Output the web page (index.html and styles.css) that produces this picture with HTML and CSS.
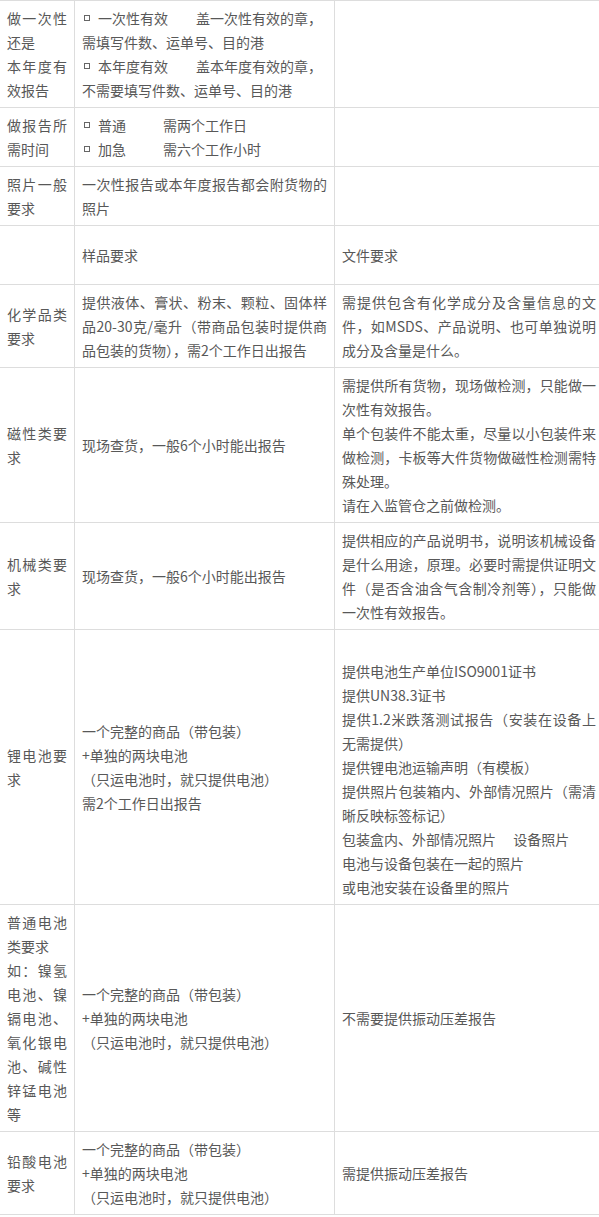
FILE: index.html
```html
<!DOCTYPE html>
<html lang="zh-CN">
<head>
<meta charset="utf-8">
<title>检测报告要求</title>
<link rel="stylesheet" href="styles.css">
</head>
<body>
<table class="spec">
  <colgroup><col class="c1"><col class="c2"><col class="c3"></colgroup>
  <tbody>
    <tr>
      <td>做一次性还是<br>本年度有效报告</td>
      <td class="opts"><span class="opt opt-wide"><i class="box"></i>一次性有效</span><span>盖一次性有效的章，</span><br><span>需填写件数、运单号、目的港</span><br><span class="opt opt-wide"><i class="box"></i>本年度有效</span><span>盖本年度有效的章，</span><br><span>不需要填写件数、运单号、目的港</span></td>
      <td></td>
    </tr>
    <tr>
      <td>做报告所需时间</td>
      <td class="opts"><span class="opt opt-narrow"><i class="box"></i>普通</span><span>需两个工作日</span><br><span class="opt opt-narrow"><i class="box"></i>加急</span><span>需六个工作小时</span></td>
      <td></td>
    </tr>
    <tr>
      <td>照片一般要求</td>
      <td>一次性报告或本年度报告都会附货物的照片</td>
      <td></td>
    </tr>
    <tr class="head-row">
      <td></td>
      <td>样品要求</td>
      <td>文件要求</td>
    </tr>
    <tr>
      <td>化学品类要求</td>
      <td>提供液体、膏状、粉末、颗粒、固体样品20-30克/毫升（带商品包装时提供商品包装的货物），需2个工作日出报告</td>
      <td>需提供包含有化学成分及含量信息的文件，如MSDS、产品说明、也可单独说明成分及含量是什么。</td>
    </tr>
    <tr>
      <td>磁性类要求</td>
      <td>现场查货，一般6个小时能出报告</td>
      <td>需提供所有货物，现场做检测，只能做一次性有效报告。<br>单个包装件不能太重，尽量以小包装件来做检测，卡板等大件货物做磁性检测需特殊处理。<br>请在入监管仓之前做检测。</td>
    </tr>
    <tr>
      <td>机械类要求</td>
      <td>现场查货，一般6个小时能出报告</td>
      <td>提供相应的产品说明书，说明该机械设备是什么用途，原理。必要时需提供证明文件（是否含油含气含制冷剂等），只能做一次性有效报告。</td>
    </tr>
    <tr>
      <td>锂电池要求</td>
      <td>一个完整的商品（带包装）<br>+单独的两块电池<br>（只运电池时，就只提供电池）<br>需2个工作日出报告</td>
      <td><br>提供电池生产单位ISO9001证书<br>提供UN38.3证书<br>提供1.2米跌落测试报告（安装在设备上无需提供）<br>提供锂电池运输声明（有模板）<br>提供照片包装箱内、外部情况照片（需清晰反映标签标记）<br>包装盒内、外部情况照片&emsp;&nbsp;设备照片<br>电池与设备包装在一起的照片<br>或电池安装在设备里的照片</td>
    </tr>
    <tr>
      <td>普通电池类要求<br>如：镍氢电池、镍镉电池、氧化银电池、碱性锌锰电池等</td>
      <td>一个完整的商品（带包装）<br>+单独的两块电池<br>（只运电池时，就只提供电池）</td>
      <td>不需要提供振动压差报告</td>
    </tr>
    <tr>
      <td>铅酸电池要求</td>
      <td>一个完整的商品（带包装）<br>+单独的两块电池<br>（只运电池时，就只提供电池）</td>
      <td>需提供振动压差报告</td>
    </tr>
  </tbody>
</table>
</body>
</html>
```

FILE: styles.css
```css
html, body {
  margin: 0;
  padding: 0;
  background: #ffffff;
}

.spec {
  border-collapse: collapse;
  table-layout: fixed;
  width: 604px;
  margin: 0 0 0 -1px;
  font-family: "Noto Sans CJK SC", "Noto Sans", sans-serif;
  font-size: 14px;
  line-height: 24px;
  color: #585858;
}

.c1 { width: 75px; }
.c2 { width: 260px; }
.c3 { width: 269px; }

.spec td {
  border: 1px solid #dddddd;
  padding: 5px 7px;
  vertical-align: middle;
  text-align: justify;
}

.spec td.opts {
  text-align: left;
}

.head-row td {
  height: 48px;
}

.opt {
  white-space: nowrap;
}

.opt-wide { margin-right: 28px; }
.opt-narrow { margin-right: 37px; }

.box {
  display: inline-block;
  width: 4px;
  height: 4px;
  border: 1px solid #666666;
  margin: 0 8px 0 2px;
  vertical-align: 3px;
}
```
